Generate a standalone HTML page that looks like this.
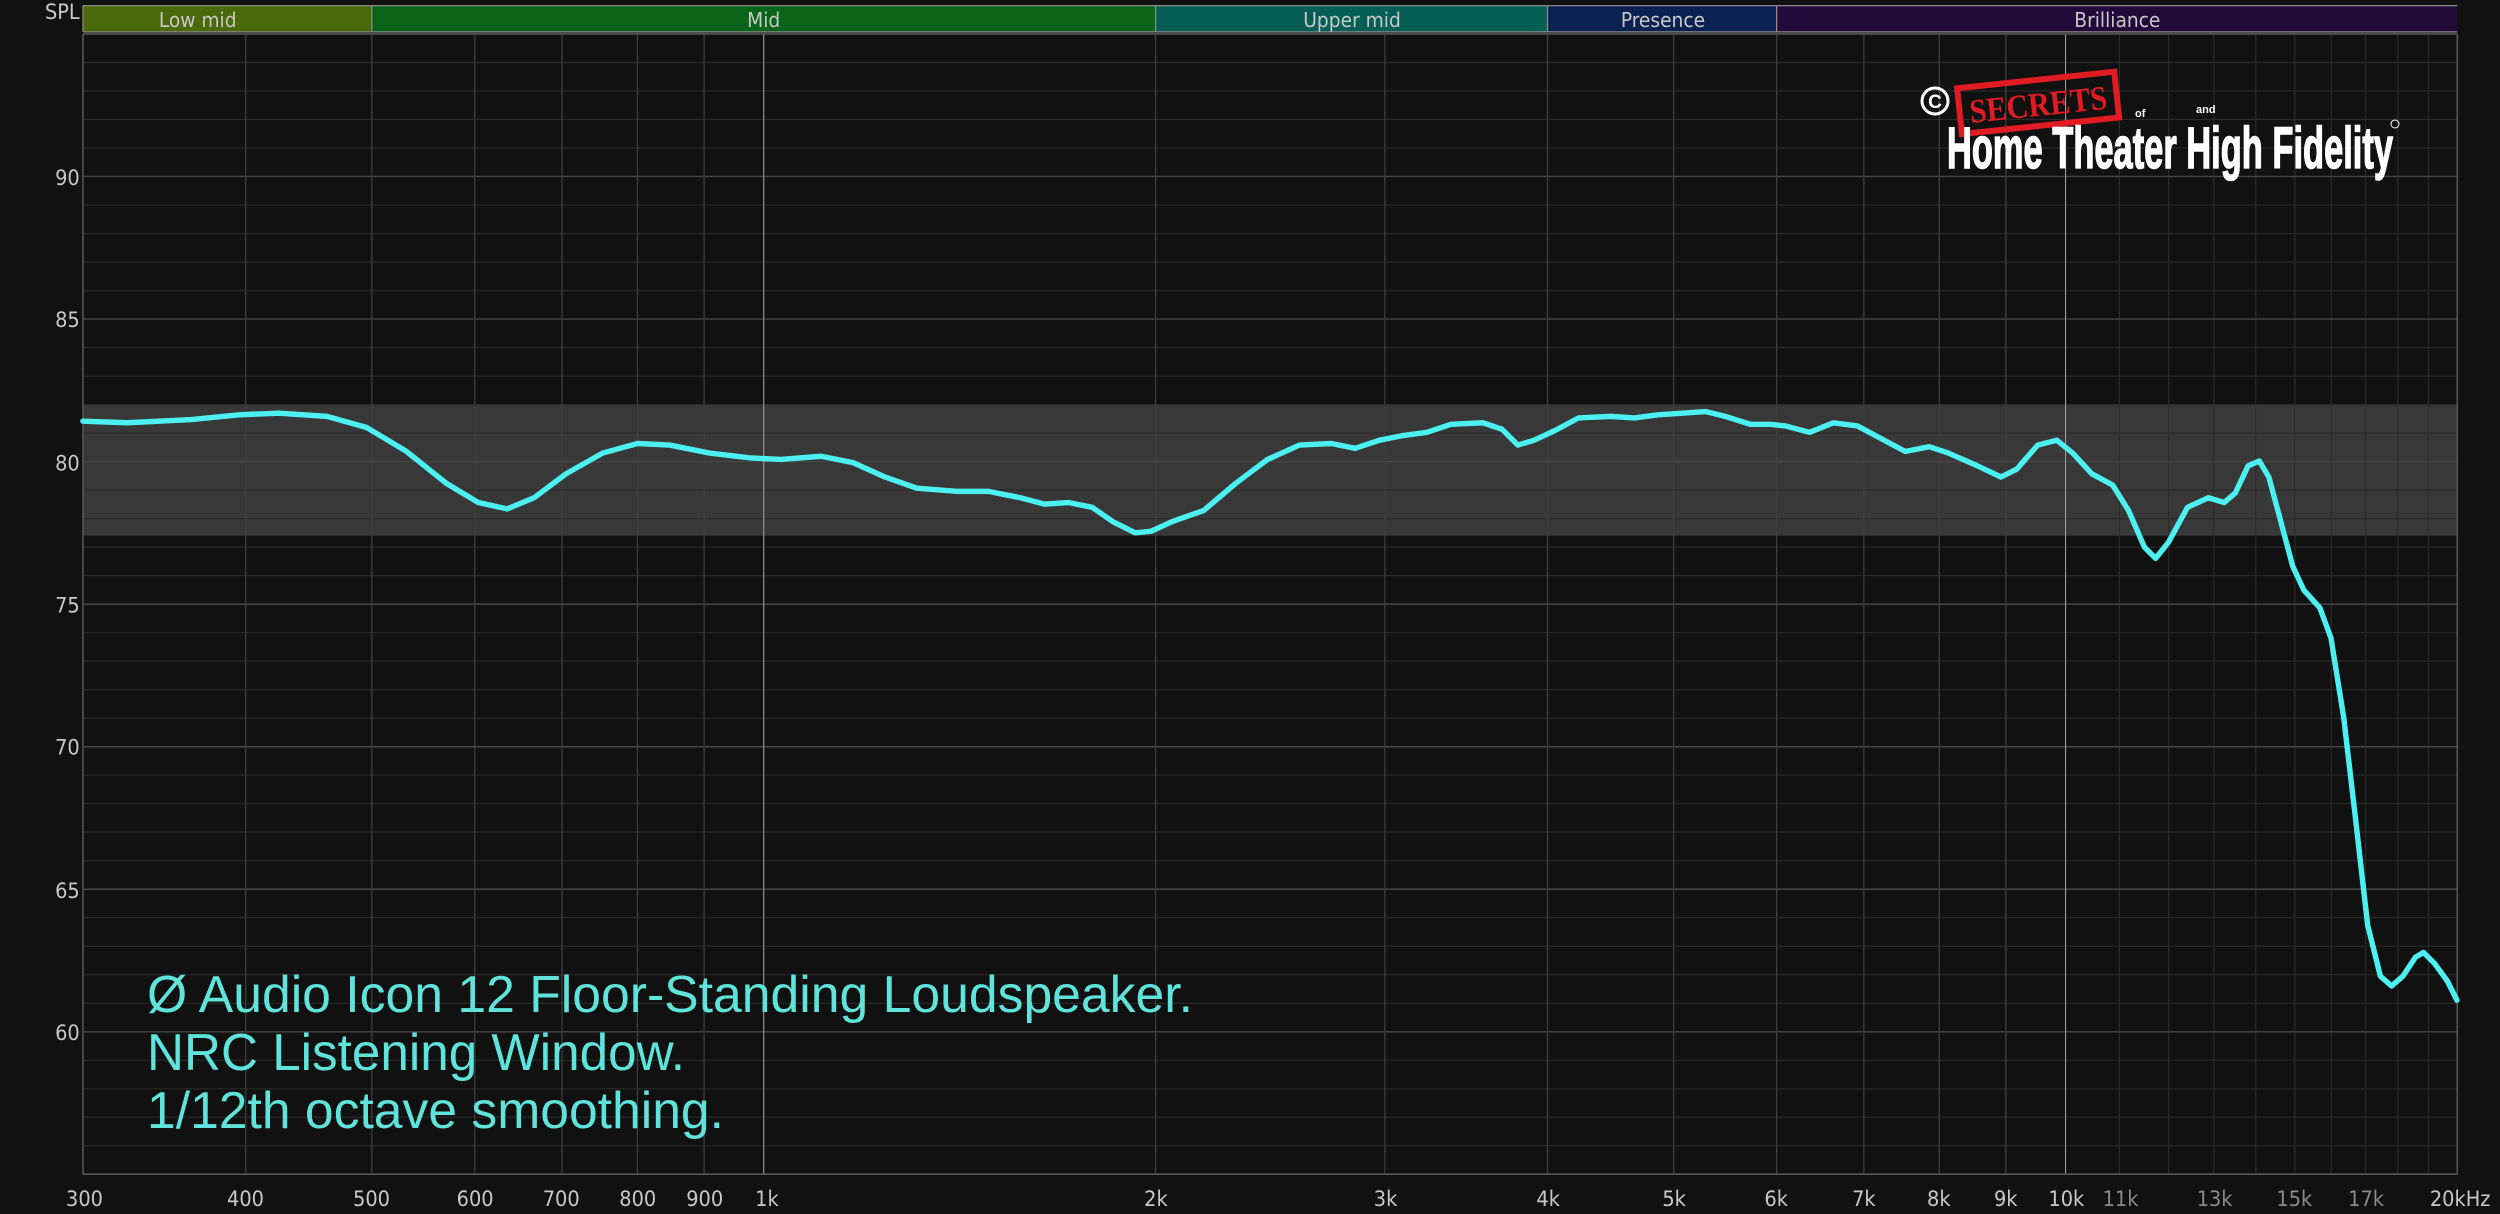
<!DOCTYPE html>
<html><head><meta charset="utf-8"><style>
html,body{margin:0;padding:0;background:#111;}
svg{display:block}
</style></head><body>
<svg width="2500" height="1214" viewBox="0 0 2500 1214" xmlns="http://www.w3.org/2000/svg">
<rect width="2500" height="1214" fill="#111"/>
<g transform="scale(1.5944,1.5953)">
 <rect x="52.06" y="3.5" width="181.1" height="16.5" fill="#4a690a"/>
 <rect x="233.2" y="3.5" width="491.6" height="16.5" fill="#0a6419"/>
 <rect x="724.8" y="3.5" width="245.8" height="16.5" fill="#075e55"/>
 <rect x="970.6" y="3.5" width="143.7" height="16.5" fill="#0a2152"/>
 <rect x="1114.3" y="3.5" width="426.9" height="16.5" fill="#230a3b"/>
 <g stroke="#8a8a8a" stroke-width="0.8">
  <line x1="52.06" y1="3.5" x2="1541.2" y2="3.5"/>
  <line x1="52.06" y1="20" x2="1541.2" y2="20"/>
  <line x1="52.06" y1="3.5" x2="52.06" y2="20"/>
  <line x1="233.2" y1="3.5" x2="233.2" y2="20"/>
  <line x1="724.8" y1="3.5" x2="724.8" y2="20"/>
  <line x1="970.6" y1="3.5" x2="970.6" y2="20"/>
  <line x1="1114.3" y1="3.5" x2="1114.3" y2="20"/>
 </g>
 <g font-family="'DejaVu Sans Condensed','Liberation Sans Narrow','Liberation Sans',sans-serif" font-size="13" fill="#c8c8c8" text-anchor="middle">
  <text x="124" y="17">Low mid</text>
  <text x="479" y="17">Mid</text>
  <text x="848" y="17">Upper mid</text>
  <text x="1043" y="17">Presence</text>
  <text x="1328" y="17">Brilliance</text>
 </g>
 <rect x="52.06" y="253.6" width="1489.2" height="82.2" fill="#383838"/>
 <g stroke="#2a2a2a" stroke-width="0.7">
  <line x1="52" x2="1541" y1="39.2" y2="39.2"/><line x1="52" x2="1541" y1="57.0" y2="57.0"/><line x1="52" x2="1541" y1="74.9" y2="74.9"/><line x1="52" x2="1541" y1="92.8" y2="92.8"/>
  <line x1="52" x2="1541" y1="128.5" y2="128.5"/><line x1="52" x2="1541" y1="146.4" y2="146.4"/><line x1="52" x2="1541" y1="164.3" y2="164.3"/><line x1="52" x2="1541" y1="182.2" y2="182.2"/>
  <line x1="52" x2="1541" y1="217.9" y2="217.9"/><line x1="52" x2="1541" y1="235.8" y2="235.8"/><line x1="52" x2="1541" y1="253.6" y2="253.6"/><line x1="52" x2="1541" y1="271.5" y2="271.5"/>
  <line x1="52" x2="1541" y1="307.2" y2="307.2"/><line x1="52" x2="1541" y1="325.1" y2="325.1"/><line x1="52" x2="1541" y1="343.0" y2="343.0"/><line x1="52" x2="1541" y1="360.8" y2="360.8"/>
  <line x1="52" x2="1541" y1="396.6" y2="396.6"/><line x1="52" x2="1541" y1="414.4" y2="414.4"/><line x1="52" x2="1541" y1="432.3" y2="432.3"/><line x1="52" x2="1541" y1="450.2" y2="450.2"/>
  <line x1="52" x2="1541" y1="485.9" y2="485.9"/><line x1="52" x2="1541" y1="503.8" y2="503.8"/><line x1="52" x2="1541" y1="521.6" y2="521.6"/><line x1="52" x2="1541" y1="539.5" y2="539.5"/>
  <line x1="52" x2="1541" y1="575.2" y2="575.2"/><line x1="52" x2="1541" y1="593.1" y2="593.1"/><line x1="52" x2="1541" y1="611.0" y2="611.0"/><line x1="52" x2="1541" y1="628.9" y2="628.9"/>
  <line x1="52" x2="1541" y1="664.6" y2="664.6"/><line x1="52" x2="1541" y1="682.5" y2="682.5"/><line x1="52" x2="1541" y1="700.3" y2="700.3"/><line x1="52" x2="1541" y1="718.2" y2="718.2"/>
 </g>
 <g stroke="#2c2c2c" stroke-width="0.7">
  <line x1="1329.3" x2="1329.3" y1="21.3" y2="736"/><line x1="1360.1" x2="1360.1" y1="21.3" y2="736"/><line x1="1388.5" x2="1388.5" y1="21.3" y2="736"/><line x1="1414.8" x2="1414.8" y1="21.3" y2="736"/><line x1="1439.3" x2="1439.3" y1="21.3" y2="736"/><line x1="1462.2" x2="1462.2" y1="21.3" y2="736"/><line x1="1483.7" x2="1483.7" y1="21.3" y2="736"/><line x1="1503.9" x2="1503.9" y1="21.3" y2="736"/><line x1="1523.1" x2="1523.1" y1="21.3" y2="736"/>
 </g>
 <g stroke="#464646" stroke-width="0.9">
  <line x1="52" x2="1541" y1="110.6" y2="110.6"/><line x1="52" x2="1541" y1="200.0" y2="200.0"/><line x1="52" x2="1541" y1="289.4" y2="289.4"/><line x1="52" x2="1541" y1="378.7" y2="378.7"/><line x1="52" x2="1541" y1="468.1" y2="468.1"/><line x1="52" x2="1541" y1="557.4" y2="557.4"/><line x1="52" x2="1541" y1="646.8" y2="646.8"/>
 </g>
 <g stroke="#3e3e3e" stroke-width="0.8">
  <line x1="154.1" x2="154.1" y1="21.3" y2="736"/><line x1="233.2" x2="233.2" y1="21.3" y2="736"/><line x1="297.8" x2="297.8" y1="21.3" y2="736"/><line x1="352.5" x2="352.5" y1="21.3" y2="736"/><line x1="399.8" x2="399.8" y1="21.3" y2="736"/><line x1="441.6" x2="441.6" y1="21.3" y2="736"/>
  <line x1="724.8" x2="724.8" y1="21.3" y2="736"/><line x1="868.6" x2="868.6" y1="21.3" y2="736"/><line x1="970.6" x2="970.6" y1="21.3" y2="736"/><line x1="1049.7" x2="1049.7" y1="21.3" y2="736"/><line x1="1114.3" x2="1114.3" y1="21.3" y2="736"/><line x1="1169.0" x2="1169.0" y1="21.3" y2="736"/><line x1="1216.3" x2="1216.3" y1="21.3" y2="736"/><line x1="1258.1" x2="1258.1" y1="21.3" y2="736"/>
 </g>
 <g stroke="#9a9a9a" stroke-width="0.7">
  <line x1="479" x2="479" y1="21.3" y2="736"/><line x1="1295.5" x2="1295.5" y1="21.3" y2="736"/>
 </g>
 <g stroke="#555" stroke-width="1">
  <line x1="52.06" y1="21.3" x2="1541.2" y2="21.3"/>
  <line x1="52.06" y1="736" x2="1541.2" y2="736"/>
  <line x1="52.06" y1="21.3" x2="52.06" y2="736"/>
  <line x1="1541.2" y1="21.3" x2="1541.2" y2="736"/>
 </g>
 <g font-family="'DejaVu Sans Condensed','Liberation Sans Narrow','Liberation Sans',sans-serif" font-size="13.5" fill="#c8c8c8" text-anchor="end">
  <text x="50" y="12">SPL</text>
  <text x="50" y="116">90</text>
  <text x="50" y="205">85</text>
  <text x="50" y="295">80</text>
  <text x="50" y="384">75</text>
  <text x="50" y="473">70</text>
  <text x="50" y="563">65</text>
  <text x="50" y="652">60</text>
 </g>
 <g font-family="'DejaVu Sans Condensed','Liberation Sans Narrow','Liberation Sans',sans-serif" font-size="13.5" fill="#c8c8c8" text-anchor="middle">
  <text x="53" y="756">300</text><text x="154" y="756">400</text><text x="233" y="756">500</text><text x="298" y="756">600</text><text x="352" y="756">700</text><text x="400" y="756">800</text><text x="442" y="756">900</text><text x="481" y="756">1k</text>
  <text x="725" y="756">2k</text><text x="869" y="756">3k</text><text x="971" y="756">4k</text><text x="1050" y="756">5k</text><text x="1114" y="756">6k</text><text x="1169" y="756">7k</text><text x="1216" y="756">8k</text><text x="1258" y="756">9k</text><text x="1296" y="756">10k</text>
  <text x="1330" y="756" fill="#8a8a8a">11k</text><text x="1389" y="756" fill="#8a8a8a">13k</text><text x="1439" y="756" fill="#8a8a8a">15k</text><text x="1484" y="756" fill="#8a8a8a">17k</text>
  <text x="1543" y="756">20kHz</text>
 </g>
 <polyline fill="none" stroke="#4df0f0" stroke-width="3.4" stroke-linejoin="round" stroke-linecap="round" points="52,264 80,265 120,263 150,260 175,259 205,261 230,268 255,283 280,303 300,315 318,319 335,312 355,297 378,284 400,278 420,279 445,284 470,287 490,288 515,286 535,290 555,299 575,306 600,308 620,308 640,312 655,316 670,315 685,318 698,327 712,334 722,333 735,327 755,320 775,303 795,288 815,279 835,278 850,281 865,276 880,273 895,271 910,266 930,265 942,269 952,279 962,276 975,270 990,262 1010,261 1025,262 1040,260 1055,259 1070,258 1082,261 1098,266 1110,266 1120,267 1135,271 1150,265 1165,267 1180,275 1195,283 1210,280 1222,284 1238,291 1255,299 1265,294 1278,279 1290,276 1300,284 1312,297 1325,304 1335,320 1345,343 1352,350 1360,340 1372,318 1385,312 1395,315 1402,309 1410,292 1417,289 1423,299 1430,325 1438,355 1445,370 1455,381 1462,400 1470,450 1477,510 1485,580 1493,612 1500,618 1507,612 1515,600 1520,597 1527,604 1535,615 1541,627"/>
</g>
<g font-family="'Liberation Sans',sans-serif" font-size="52" fill="#5fe3da">
 <text x="147" y="1012" textLength="1046" lengthAdjust="spacingAndGlyphs">Ø Audio Icon 12 Floor-Standing Loudspeaker.</text>
 <text x="147" y="1070" textLength="538" lengthAdjust="spacingAndGlyphs">NRC Listening Window.</text>
 <text x="147" y="1128" textLength="577" lengthAdjust="spacingAndGlyphs">1/12th octave smoothing.</text>
</g>
<g>
 <circle cx="1935" cy="101" r="13" fill="none" stroke="#fff" stroke-width="3"/>
 <text x="1935" y="108" font-family="'Liberation Sans',sans-serif" font-weight="bold" font-size="19" fill="#fff" text-anchor="middle">C</text>
 <g transform="rotate(-6 2037 102)">
  <rect x="1959" y="80" width="158" height="46" fill="none" stroke="#e01b22" stroke-width="6"/>
  <text x="2038" y="116" font-family="'Liberation Serif',serif" font-weight="bold" font-size="34" fill="#e01b22" text-anchor="middle" textLength="138" lengthAdjust="spacingAndGlyphs">SECRETS</text>
 </g>
 <text x="1947" y="168" font-family="'Liberation Sans Narrow','Liberation Sans',sans-serif" font-weight="bold" font-size="58" fill="#fff" stroke="#fff" stroke-width="1.5" textLength="446" lengthAdjust="spacingAndGlyphs">Home Theater High Fidelity</text>
 <text x="2135" y="117" font-family="'Liberation Sans',sans-serif" font-weight="bold" font-size="11" fill="#fff">of</text>
 <text x="2196" y="113" font-family="'Liberation Sans',sans-serif" font-weight="bold" font-size="11" fill="#fff">and</text>
 <circle cx="2395" cy="124" r="4" fill="none" stroke="#fff" stroke-width="1"/>
</g>
</svg>
</body></html>
